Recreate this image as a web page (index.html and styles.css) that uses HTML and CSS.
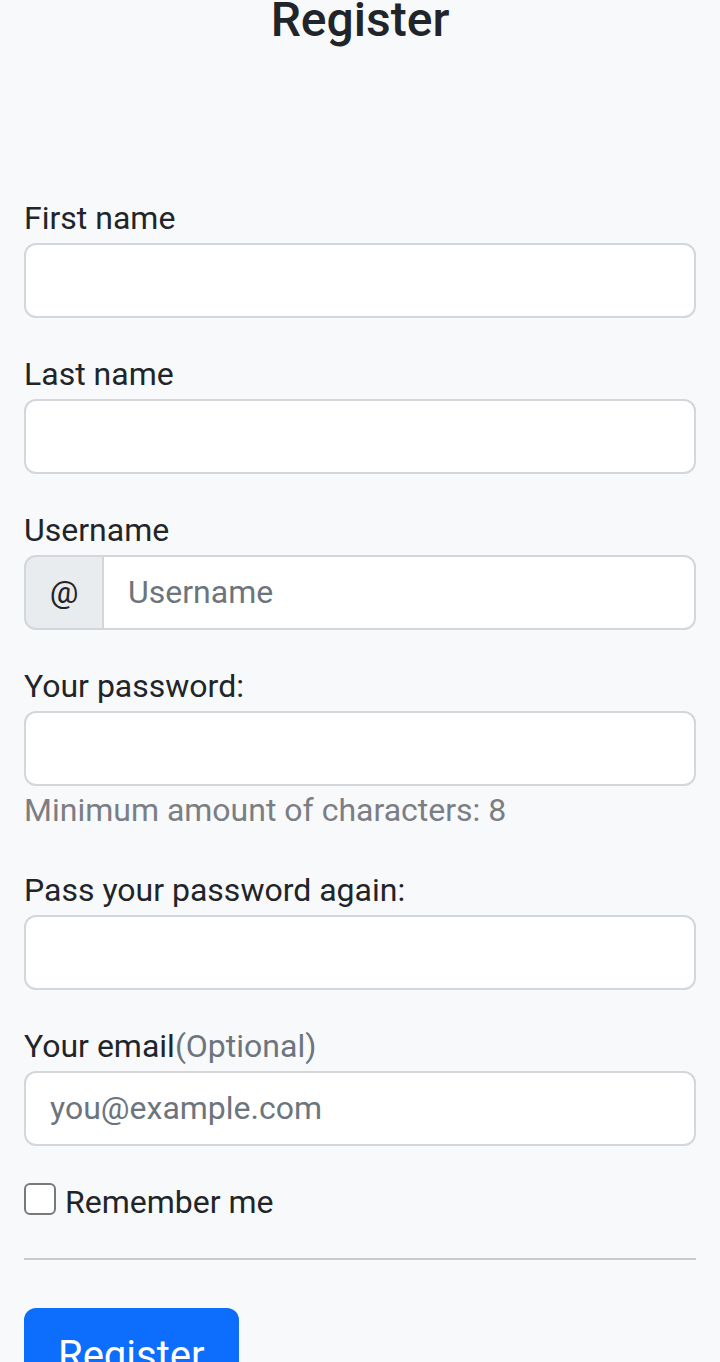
FILE: index.html
```html
<!DOCTYPE html>
<html lang="en">
<head>
<meta charset="utf-8">
<title>Register</title>
<link rel="stylesheet" href="styles.css">
</head>
<body>
<main class="page">
  <h1 class="title">Register</h1>
  <form class="form">
    <div class="field">
      <label class="label" for="first">First name</label>
      <input class="control" id="first" type="text">
    </div>
    <div class="field">
      <label class="label" for="last">Last name</label>
      <input class="control" id="last" type="text">
    </div>
    <div class="field">
      <label class="label" for="user">Username</label>
      <div class="group">
        <span class="addon">@</span>
        <input class="control control-grouped" id="user" type="text" placeholder="Username">
      </div>
    </div>
    <div class="field">
      <label class="label" for="pass">Your password:</label>
      <input class="control" id="pass" type="password">
      <div class="help">Minimum amount of characters: 8</div>
    </div>
    <div class="field">
      <label class="label" for="pass2">Pass your password again:</label>
      <input class="control" id="pass2" type="password">
    </div>
    <div class="field">
      <label class="label" for="email">Your email<span class="muted">(Optional)</span></label>
      <input class="control" id="email" type="email" placeholder="you@example.com">
    </div>
    <div class="check">
      <input class="check-box" id="remember" type="checkbox">
      <label class="check-label" for="remember">Remember me</label>
    </div>
    <hr class="divider">
    <button class="btn" type="button">Register</button>
  </form>
</main>
</body>
</html>
```
FILE: styles.css
```css
* { box-sizing: border-box; }
html, body { margin: 0; padding: 0; }
body {
  background: #f8f9fa;
  color: #212529;
  font-family: Roboto, "Liberation Sans", Arial, sans-serif;
  font-size: 32px;
  line-height: 1.5;
  overflow: hidden;
}
.page {
  padding: 0 24px;
}
.title {
  margin: -9px 0 145px;
  text-align: center;
  font-size: 48px;
  font-weight: 500;
  line-height: 57.6px;
  color: #212529;
}
.form { margin: 0; }
.field { margin-bottom: 32px; }
.label {
  display: block;
  line-height: 48px;
  margin-bottom: 1px;
  color: #212529;
}
.muted { color: #6c757d; }
.control {
  display: block;
  width: 100%;
  height: 75px;
  padding: 0 24px;
  font: inherit;
  font-size: 32px;
  color: #212529;
  background: #fff;
  border: 2px solid #d3d6da;
  border-radius: 12px;
  outline: none;
}
.control::placeholder { color: #6c757d; opacity: 1; }
.group {
  display: flex;
  align-items: stretch;
}
.addon {
  display: flex;
  align-items: center;
  justify-content: center;
  width: 80px;
  height: 75px;
  background: #e9ecef;
  border: 2px solid #d3d6da;
  border-radius: 12px 0 0 12px;
  color: #212529;
  font-size: 32px;
}
.control-grouped {
  flex: 1;
  width: auto;
  margin-left: -2px;
  border-radius: 0 12px 12px 0;
}
.help {
  margin-top: 0;
  font-size: 32px;
  line-height: 48px;
  color: #7b7e82;
}
.check {
  display: flex;
  align-items: flex-start;
  gap: 9px;
  height: 48px;
}
.check-box {
  appearance: none;
  -webkit-appearance: none;
  flex: none;
  width: 32px;
  height: 32px;
  margin: 5px 0 0;
  background: #fff;
  border: 2px solid #77797b;
  border-radius: 6px;
}
.check-label {
  line-height: 48px;
  color: #212529;
}
.divider {
  margin: 32px 0 48px;
  border: 0;
  border-top: 2px solid #c9cacc;
  height: 0;
}
.btn {
  display: inline-block;
  padding: 16px 32px;
  font: inherit;
  font-size: 40px;
  line-height: 60px;
  color: #fff;
  background: #0d6efd;
  border: 2px solid #0d6efd;
  border-radius: 12px;
}
```
